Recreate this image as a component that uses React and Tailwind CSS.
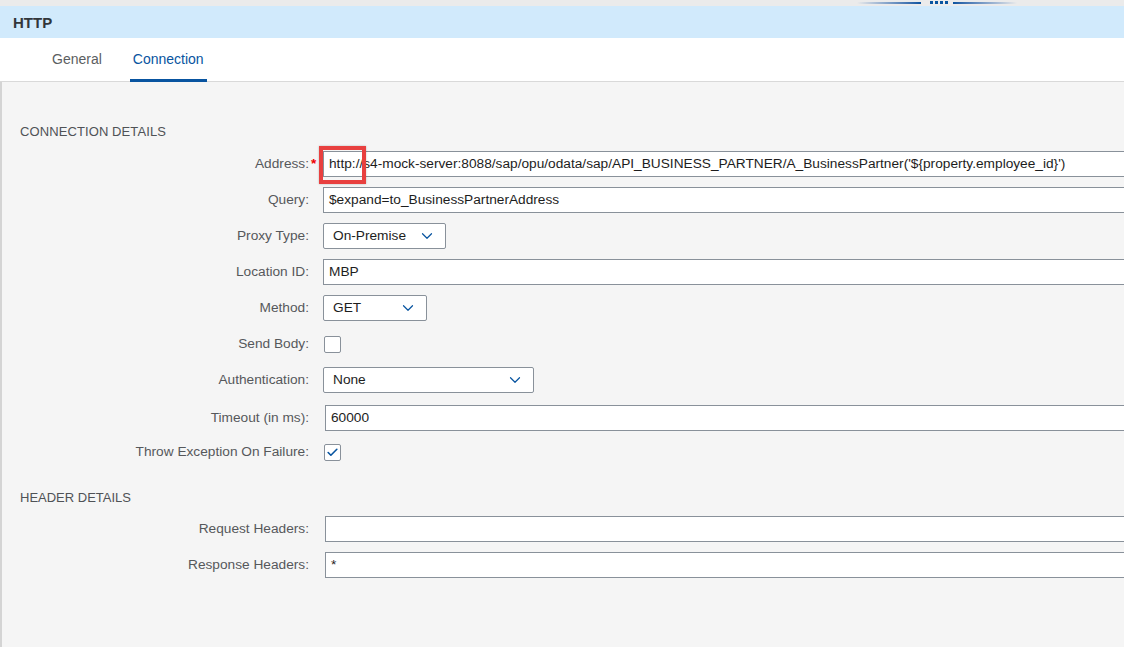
import { ChevronDown, Check } from "lucide-react";

const font = { fontFamily: '"Liberation Sans", Arial, sans-serif' };

function Label({ children, required }) {
  return (
    <div className="w-[307px] shrink-0 text-right text-[13.7px] text-[#55585b]">
      {children}
      {required && <span className="absolute ml-[2px] text-[#e00] font-bold">*</span>}
    </div>
  );
}

function TextInput({ value, boxed, shift }) {
  return (
    <div
      className={`relative flex-1 h-[26px] bg-white border border-[#89919a] border-r-0 flex items-center pl-[5px] text-[13.7px] text-[#1d1d1d] whitespace-nowrap ${
        shift ? "ml-[16px]" : "ml-[14px]"
      }`}
    >
      {value}
      {boxed && (
        <div className="absolute left-[-5px] top-[-6px] w-[47px] h-[38px] border-[4px] border-[#e8403f] shadow-[0_0_2px_rgba(0,0,0,0.25)]" />
      )}
    </div>
  );
}

function Select({ value, width }) {
  return (
    <div
      className={`ml-[14px] h-[26px] bg-white border border-[#89919a] rounded-[2px] flex items-center justify-between pl-[9px] pr-[9px] text-[13.7px] text-[#1d1d1d] ${width}`}
    >
      <span>{value}</span>
      <ChevronDown size={18} strokeWidth={1.6} className="text-[#0854a0]" />
    </div>
  );
}

function Checkbox({ checked }) {
  return (
    <div className="ml-[15px] w-[17px] h-[17px] bg-white border border-[#89919a] rounded-[2px] flex items-center justify-center">
      {checked && <Check size={13} strokeWidth={3} className="text-[#0854a0]" />}
    </div>
  );
}

function Row({ h, children }) {
  return <div className={`flex items-center ${h}`}>{children}</div>;
}

export default function App() {
  return (
    <div style={font} className="w-[1124px] h-[647px] overflow-hidden bg-[#f5f5f5] flex flex-col">
      {/* splitter strip */}
      <div className="h-[6px] bg-[#ebebeb] relative shrink-0">
        <div className="absolute left-[857px] top-[2px] w-[64px] h-[2px] bg-gradient-to-r from-[#ebebeb] to-[#0854a0]" />
        <div className="absolute left-[930px] top-[1px] flex gap-[2px]">
          <div className="w-[3px] h-[3px] bg-[#0854a0]" />
          <div className="w-[3px] h-[3px] bg-[#0854a0]" />
          <div className="w-[3px] h-[3px] bg-[#0854a0]" />
          <div className="w-[3px] h-[3px] bg-[#0854a0]" />
        </div>
        <div className="absolute left-[953px] top-[2px] w-[64px] h-[2px] bg-gradient-to-r from-[#0854a0] to-[#ebebeb]" />
      </div>

      {/* title bar */}
      <div className="h-[32px] bg-[#d1eafc] flex items-center pl-[13px] shrink-0">
        <span className="text-[15px] font-bold text-[#32363a] pt-[2px]">HTTP</span>
      </div>

      {/* tabs */}
      <div className="h-[44px] bg-white border-b border-[#d9d9d9] flex items-end pl-[52px] gap-[31px] shrink-0">
        <div className="h-full flex items-center text-[14px] text-[#5b5e61] pb-[1px]">General</div>
        <div className="h-full flex items-center text-[14px] text-[#0854a0] relative px-[3px] -ml-[3px] pb-[1px]">
          Connection
          <div className="absolute left-0 right-0 bottom-[-1px] h-[3px] bg-[#0854a0]" />
        </div>
      </div>

      {/* content */}
      <div className="flex-1 border-l-2 border-[#d4d4d4] flex flex-col">
        <div className="pt-[40px] pl-[18px] h-[64px] text-[13px] text-[#4f5256] uppercase tracking-[0.1px]">
          Connection Details
        </div>

        <Row h="h-[36px]">
          <Label required>Address:</Label>
          <TextInput
            boxed
            value="http://s4-mock-server:8088/sap/opu/odata/sap/API_BUSINESS_PARTNER/A_BusinessPartner('${property.employee_id}')"
          />
        </Row>
        <Row h="h-[36px]">
          <Label>Query:</Label>
          <TextInput value="$expand=to_BusinessPartnerAddress" />
        </Row>
        <Row h="h-[36px]">
          <Label>Proxy Type:</Label>
          <Select value="On-Premise" width="w-[123px]" />
        </Row>
        <Row h="h-[36px]">
          <Label>Location ID:</Label>
          <TextInput value="MBP" />
        </Row>
        <Row h="h-[36px]">
          <Label>Method:</Label>
          <Select value="GET" width="w-[104px]" />
        </Row>
        <Row h="h-[36px]">
          <Label>Send Body:</Label>
          <Checkbox />
        </Row>
        <Row h="h-[36px]">
          <Label>Authentication:</Label>
          <Select value="None" width="w-[211px]" />
        </Row>
        <Row h="h-[40px]">
          <Label>Timeout (in ms):</Label>
          <TextInput shift value="60000" />
        </Row>
        <Row h="h-[28px]">
          <Label>Throw Exception On Failure:</Label>
          <Checkbox checked />
        </Row>

        <div className="pt-[22px] pl-[18px] h-[45px] text-[13px] text-[#4f5256] uppercase">
          Header Details
        </div>

        <Row h="h-[36px]">
          <Label>Request Headers:</Label>
          <TextInput shift value="" />
        </Row>
        <Row h="h-[36px]">
          <Label>Response Headers:</Label>
          <TextInput shift value="*" />
        </Row>
      </div>
    </div>
  );
}
